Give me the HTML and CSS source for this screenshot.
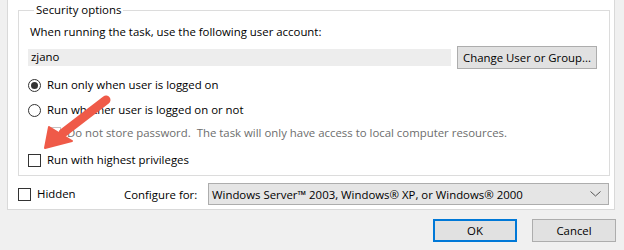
FILE: index.html
```html
<!DOCTYPE html>
<html lang="en">
<head>
    <meta charset="UTF-8">
    <title>Task Properties - General</title>
    <link rel="stylesheet" href="styles.css">
</head>
<body>
    <div class="tab-page">
        <fieldset class="group">
            <legend>Security options</legend>
            <p class="label">When running the task, use the following user account:</p>
            <div class="account-row">
                <div class="account-field">zjano</div>
                <button class="btn btn-change">Change User or Group...</button>
            </div>
            <label class="option opt-first"><span class="radio checked"></span>Run only when user is logged on</label>
            <label class="option opt-second"><span class="radio"></span>Run whether user is logged on or not</label>
            <label class="option sub disabled"><span class="check"></span>Do not store password.&nbsp; The task will only have access to local computer resources.</label>
            <label class="option opt-last"><span class="check"></span>Run with highest privileges</label>
        </fieldset>
        <div class="bottom-row">
            <label class="option hidden-opt"><span class="check"></span>Hidden</label>
            <span class="configure-label">Configure for:</span>
            <div class="select">
                <span>Windows Server™ 2003, Windows® XP, or Windows® 2000</span>
                <svg width="11" height="6" viewBox="0 0 11 6"><path d="M0.5 0.5 L5.5 5 L10.5 0.5" fill="none" stroke="#555" stroke-width="1"/></svg>
            </div>
        </div>
    </div>
    <div class="dialog-buttons">
        <button class="btn btn-ok">OK</button>
        <button class="btn">Cancel</button>
    </div>

    <svg class="arrow" width="624" height="250" viewBox="0 0 624 250">
        <line x1="106" y1="100" x2="63" y2="133" stroke="#ef5a48" stroke-width="9" stroke-linecap="round"/>
        <polygon points="45,148 49,127 72,141" fill="#ef5a48" stroke="#ef5a48" stroke-width="2" stroke-linejoin="round"/>
    </svg>
</body>
</html>
```

FILE: styles.css
```css
body {
    margin: 0;
    background: #f0f0f0;
    font-family: 'Segoe UI', 'Open Sans', sans-serif;
    font-size: 11.4px;
    color: #000;
    position: relative;
    height: 250px;
    overflow: hidden;
}
.tab-page {
    margin-left: 7px;
    width: 608px;
    height: 210px;
    background: #fff;
    border: 1px solid #d9d9d9;
    border-top: none;
    padding-top: 2px;
    box-sizing: border-box;
}
.group {
    margin: 0 0 0 10px;
    width: 592px;
    height: 174px;
    box-sizing: border-box;
    border: 1px solid #dcdcdc;
    padding: 0 0 0 9px;
}
.group legend {
    padding: 0 2px;
    margin-left: 6px;
    line-height: 16px;
}
.label {
    margin: 6px 0 0 2px;
    line-height: 16px;
}
.account-row {
    display: flex;
    align-items: center;
    margin-top: 6px;
}
.account-field {
    width: 423px;
    height: 17px;
    line-height: 16px;
    background: #ededed;
    padding-left: 3px;
    box-sizing: border-box;
}
.btn {
    font-family: inherit;
    font-size: 11.4px;
    background: #e1e1e1;
    border: 1px solid #adadad;
    color: #000;
    padding: 0;
    height: 23px;
    box-sizing: border-box;
}
.btn-change {
    margin-left: 6px;
    width: 140px;
}
.option {
    display: flex;
    align-items: center;
    line-height: 16px;
    height: 16px;
}
.opt-first {
    margin-top: 8px;
}
.opt-second {
    margin-top: 9px;
}
.sub {
    margin-top: 7px;
    margin-left: 20px;
}
.opt-last {
    margin-top: 11px;
}
.radio {
    width: 13px;
    height: 13px;
    border: 1px solid #333;
    border-radius: 50%;
    box-sizing: border-box;
    margin-right: 6px;
    display: flex;
    align-items: center;
    justify-content: center;
    flex-shrink: 0;
}
.radio.checked::after {
    content: '';
    width: 7px;
    height: 7px;
    border-radius: 50%;
    background: #333;
}
.check {
    width: 13px;
    height: 13px;
    border: 1px solid #333;
    box-sizing: border-box;
    background: #fff;
    margin-right: 6px;
    flex-shrink: 0;
}
.disabled {
    color: #6d6d6d;
}
.disabled .check {
    border-color: #c4c4c4;
}
.bottom-row {
    display: flex;
    align-items: center;
    margin-top: 7px;
    margin-left: 10px;
}
.hidden-opt {
    width: 106px;
}
.configure-label {
    width: 84px;
}
.select {
    display: flex;
    align-items: center;
    justify-content: space-between;
    width: 401px;
    height: 22px;
    box-sizing: border-box;
    background: #e5e5e5;
    border: 1px solid #adadad;
    padding: 0 7px 0 3px;
}
.dialog-buttons {
    display: flex;
    justify-content: flex-end;
    gap: 15px;
    padding: 9px 8px 0 0;
}
.dialog-buttons .btn {
    width: 84px;
}
.btn-ok {
    border: 2px solid #0078d7;
}
.arrow {
    position: absolute;
    left: 0;
    top: 0;
    pointer-events: none;
}
```
